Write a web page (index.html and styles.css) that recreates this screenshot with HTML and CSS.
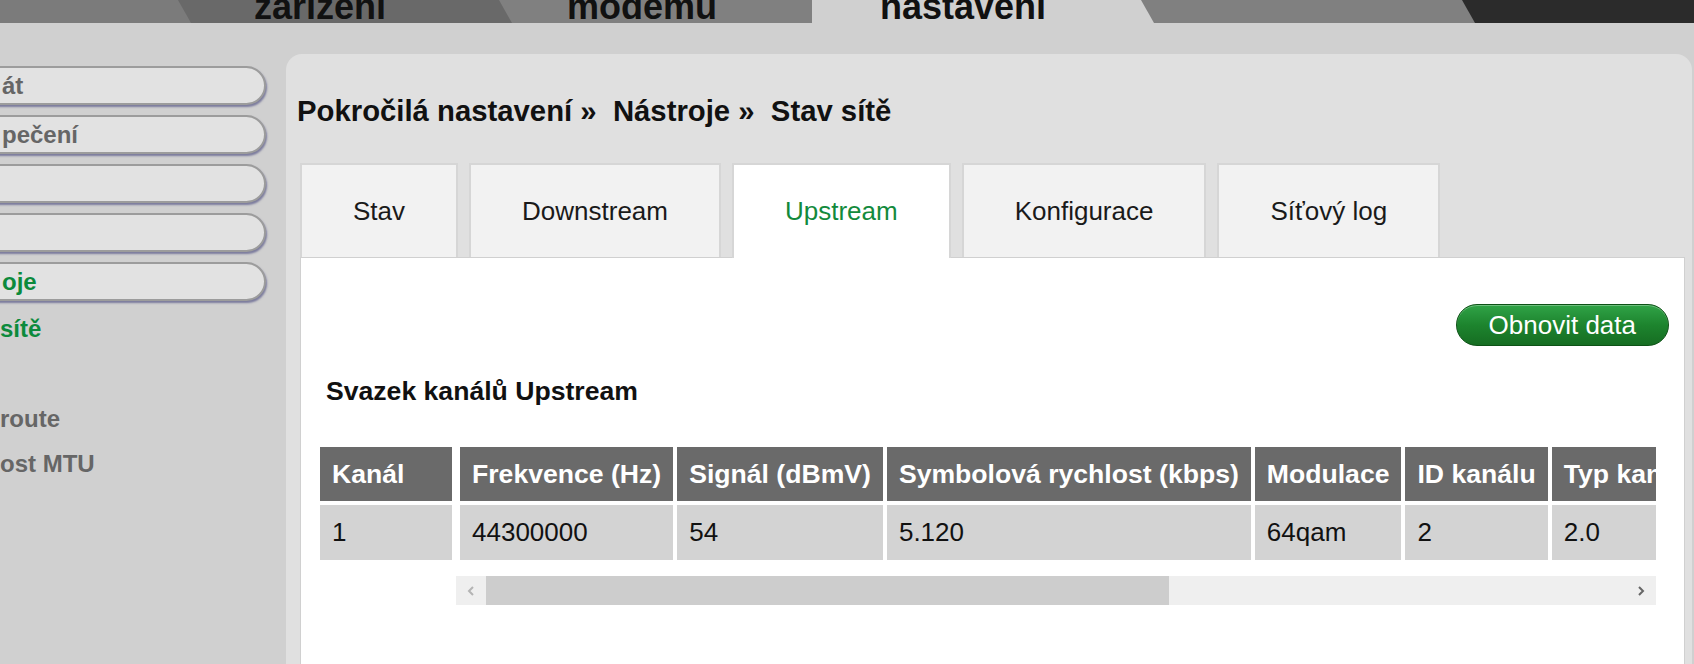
FILE: index.html
```html
<!DOCTYPE html>
<html lang="cs">
<head>
<meta charset="utf-8">
<title>Stav sítě</title>
<link rel="stylesheet" href="styles.css">
</head>
<body>
<header class="topbar">
  <div class="seg seg1"></div>
  <div class="seg seg2 slant"><span>zařízení</span></div>
  <div class="seg seg3 slant"><span>modemu</span></div>
  <div class="seg seg4"><span>nastavení</span></div>
  <div class="seg seg5 slant"></div>
  <div class="seg seg6 slant"></div>
</header>
<div class="main">
  <nav class="sidebar">
    <a class="pill">át</a>
    <a class="pill">pečení</a>
    <a class="pill"></a>
    <a class="pill"></a>
    <a class="pill on">oje</a>
    <ul class="sub">
      <li class="on">sítě</li>
      <li>&nbsp;</li>
      <li>route</li>
      <li>ost MTU</li>
    </ul>
  </nav>
  <section class="panel">
    <h1 class="crumb">Pokročilá nastavení »&nbsp; Nástroje »&nbsp; Stav sítě</h1>
    <div class="tabs">
      <div class="tab">Stav</div>
      <div class="tab">Downstream</div>
      <div class="tab active">Upstream</div>
      <div class="tab">Konfigurace</div>
      <div class="tab">Síťový log</div>
    </div>
    <div class="content">
      <div class="toolbar"><button class="btn">Obnovit data</button></div>
      <h2 class="heading">Svazek kanálů Upstream</h2>
      <div class="grid">
        <table class="tbl fixed">
          <tr><th class="kanal">Kanál</th></tr>
          <tr><td>1</td></tr>
        </table>
        <div class="scroller">
          <div class="scroll-view">
            <table class="tbl">
              <tr>
                <th>Frekvence (Hz)</th>
                <th>Signál (dBmV)</th>
                <th>Symbolová rychlost (kbps)</th>
                <th>Modulace</th>
                <th>ID kanálu</th>
                <th>Typ kanálu</th>
              </tr>
              <tr>
                <td>44300000</td>
                <td>54</td>
                <td>5.120</td>
                <td>64qam</td>
                <td>2</td>
                <td>2.0</td>
              </tr>
            </table>
          </div>
          <div class="scrollbar">
            <div class="sb-btn left"><svg width="8" height="10" viewBox="0 0 8 10"><path d="M6 1 L2 5 L6 9" fill="none" stroke="#b4b4b4" stroke-width="2"/></svg></div>
            <div class="sb-thumb"></div>
            <div class="sb-track"></div>
            <div class="sb-btn right"><svg width="8" height="10" viewBox="0 0 8 10"><path d="M2 1 L6 5 L2 9" fill="none" stroke="#666" stroke-width="2"/></svg></div>
          </div>
        </div>
      </div>
    </div>
  </section>
</div>
</body>
</html>
```
FILE: styles.css
```css
* { box-sizing: border-box; }

html, body {
  margin: 0;
  width: 1694px;
  height: 664px;
  overflow: hidden;
  background: #d0d0d0;
  font-family: "Liberation Sans", Arial, sans-serif;
}

/* top navigation */
.topbar {
  display: flex;
  height: 23px;
  overflow: hidden;
}
.seg {
  flex: none;
  height: 23px;
  font-size: 36px;
  font-weight: bold;
  color: #111;
  overflow: hidden;
}
.seg span {
  display: block;
  line-height: 13px;
  text-align: center;
  white-space: nowrap;
}
.slant {
  margin-left: -13px;
  clip-path: polygon(0 0, 100% 0, 100% 100%, 13px 100%);
}
.seg1 { width: 191px; background: #7b7b7b; }
.seg2 { width: 334px; background: #696969; padding-right: 50px; }
.seg3 { width: 313px; background: #808080; padding-right: 27px; }
.seg4 { width: 342px; background: #d0d0d0; padding-right: 40px; }
.seg5 { width: 334px; background: #808080; }
.seg6 { flex: 1; background: #2b2b2b; }

.main {
  display: flex;
  height: 641px;
}

/* sidebar */
.sidebar {
  flex: none;
  width: 286px;
  padding-top: 43px;
  overflow: hidden;
}
.pill {
  display: flex;
  align-items: center;
  width: 296px;
  height: 39px;
  margin: 0 0 10px -30px;
  padding-left: 30px;
  border: 2px solid #9c9c9c;
  border-radius: 20px;
  background: #e2e2e2;
  box-shadow: 1px 2px 2px rgba(95, 95, 140, 0.75);
  font-size: 24px;
  font-weight: bold;
  color: #666;
}
.pill.on { color: #0c8a3c; }
.sub {
  list-style: none;
  margin: -5px 0 0;
  padding: 0;
  font-size: 24px;
  font-weight: bold;
  color: #666;
}
.sub li {
  height: 45px;
  line-height: 45px;
  white-space: nowrap;
}
.sub li.on { color: #0c8a3c; }

/* panel */
.panel {
  flex: 1;
  min-width: 0;
  margin: 31px 2px 0 0;
  padding: 40px 7px 0 14px;
  background: #e0e0e0;
  border-radius: 16px 16px 0 0;
  display: flex;
  flex-direction: column;
}
.crumb {
  margin: 0 0 35px -3px;
  font-size: 29.3px;
  line-height: 34px;
  font-weight: bold;
  color: #111;
  white-space: nowrap;
}
.tabs {
  display: flex;
  gap: 11px;
  height: 94px;
  flex: none;
}
.tab {
  display: flex;
  align-items: center;
  padding: 0 51px;
  background: #f2f2f2;
  border: 2px solid #d6d6d6;
  border-bottom: none;
  font-size: 26px;
  color: #1a1a1a;
  white-space: nowrap;
}
.tab.active {
  background: #fff;
  color: #138a3c;
  height: 95px;
  margin-bottom: -1px;
  position: relative;
  z-index: 1;
}
.content {
  flex: 1;
  background: #fff;
  border: 1px solid #d0d0d0;
  border-bottom: none;
}
.toolbar {
  display: flex;
  justify-content: flex-end;
  padding: 46px 15px 0 0;
}
.btn {
  height: 42px;
  padding: 0 32px;
  border: 1px solid #0d5216;
  border-radius: 21px;
  background: linear-gradient(#30a347, #1d842e 50%, #166d22);
  box-shadow: inset 0 1px 0 rgba(255, 255, 255, 0.3);
  font-family: "Liberation Sans", Arial, sans-serif;
  font-size: 26px;
  line-height: 38px;
  color: #fff;
}
.heading {
  margin: 30px 0 0 25px;
  font-size: 26.6px;
  line-height: 30px;
  font-weight: bold;
  color: #111;
}

/* table */
.grid {
  display: flex;
  align-items: flex-start;
  margin: 37px 28px 0 15px;
}
.tbl {
  border-collapse: separate;
  border-spacing: 4px;
  font-size: 26px;
  white-space: nowrap;
}
.tbl th {
  height: 54px;
  padding: 0 12px;
  background: #6a6a6a;
  color: #fff;
  font-size: 26.6px;
  font-weight: bold;
  text-align: left;
}
.tbl td {
  height: 55px;
  padding: 0 12px;
  background: #d3d3d3;
  color: #111;
}
.fixed { flex: none; }
.fixed .kanal { width: 132px; }
.scroller {
  flex: 1;
  min-width: 0;
}
.scroll-view { overflow: hidden; }
.scrollbar {
  display: flex;
  height: 29px;
  margin-top: 12px;
  background: #efefef;
}
.sb-btn {
  flex: none;
  width: 30px;
  display: flex;
  align-items: center;
  justify-content: center;
}
.sb-thumb {
  flex: none;
  width: 683px;
  background: #cdcdcd;
}
.sb-track { flex: 1; }
```
